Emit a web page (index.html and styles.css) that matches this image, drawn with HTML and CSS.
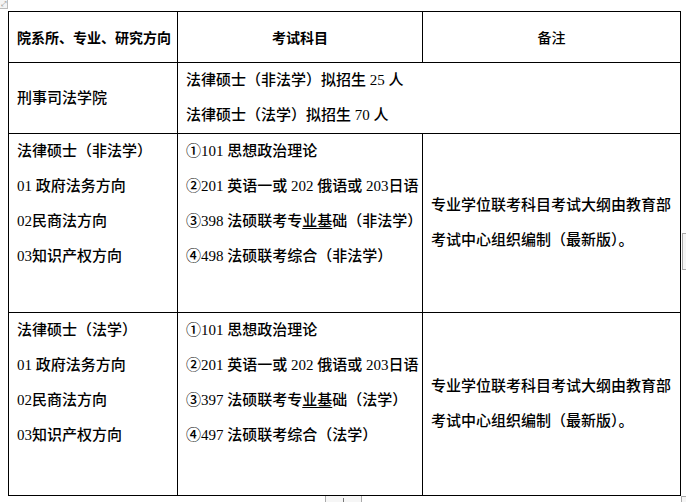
FILE: index.html
```html
<!DOCTYPE html>
<html lang="zh-CN">
<head>
<meta charset="utf-8">
<title>考试科目</title>
<link rel="stylesheet" href="styles.css">
</head>
<body>
<div class="page">
  <span class="handle-move">⤢</span>
  <table class="exam">
    <colgroup>
      <col class="c1">
      <col class="c2">
      <col class="c3">
    </colgroup>
    <tr class="r-head">
      <th class="left">院系所、专业、研究方向</th>
      <th>考试科目</th>
      <th class="light">备注</th>
    </tr>
    <tr class="r-school">
      <td class="mid">刑事司法学院</td>
      <td class="mid" colspan="2">法律硕士（非法学）拟招生 25 人<br>法律硕士（法学）拟招生 70 人</td>
    </tr>
    <tr class="r-a">
      <td class="top">法律硕士（非法学）<br>01 政府法务方向<br>02民商法方向<br>03知识产权方向</td>
      <td class="top">①101 思想政治理论<br>②201 英语一或 202 俄语或 203日语<br>③398 法硕联考专<u>业基</u>础（非法学）<br>④498 法硕联考综合（非法学）</td>
      <td class="mid note">专业学位联考科目考试大纲由教育部<br>考试中心组织编制（最新版）。</td>
    </tr>
    <tr class="r-b">
      <td class="top">法律硕士（法学）<br>01 政府法务方向<br>02民商法方向<br>03知识产权方向</td>
      <td class="top">①101 思想政治理论<br>②201 英语一或 202 俄语或 203日语<br>③397 法硕联考专<u>业基</u>础（法学）<br>④497 法硕联考综合（法学）</td>
      <td class="mid note">专业学位联考科目考试大纲由教育部<br>考试中心组织编制（最新版）。</td>
    </tr>
  </table>
  <span class="handle-right"></span>
  <span class="handle-bottom"></span>
  <span class="handle-corner"></span>
</div>
</body>
</html>
```
FILE: styles.css
```css
html, body {
  margin: 0;
  padding: 0;
  background: #fff;
}
.page {
  position: relative;
  width: 686px;
  height: 502px;
  overflow: hidden;
  padding: 11px 0 0 8px;
  box-sizing: border-box;
  font-family: "Liberation Serif", "Noto Sans CJK SC", serif;
  font-size: 15px;
  font-weight: 500;
  color: #000;
}
.exam {
  border-collapse: collapse;
  table-layout: fixed;
  width: 672px;
}
.c1 { width: 169px; }
.c2 { width: 245px; }
.c3 { width: 258px; }
.exam th, .exam td {
  border: 1px solid #000;
  padding: 0 8px;
  line-height: 35px;
  text-align: left;
  white-space: nowrap;
}
.exam th {
  font-family: "Noto Sans CJK SC", sans-serif;
  font-weight: bold;
  font-size: 14px;
  text-align: center;
  vertical-align: middle;
}
.exam th.left { text-align: left; }
.exam th.light { font-weight: 500; }
.r-head { height: 51px; }
.r-school { height: 71px; }
.r-a { height: 179px; }
.r-b { height: 183px; }
.mid { vertical-align: middle; }
.top { vertical-align: top; }
.note { line-height: 33px; }
u { text-decoration: underline; text-underline-offset: 2px; }
.handle-move {
  position: absolute;
  left: 0;
  top: 0;
  width: 7px;
  height: 8px;
  border-right: 1px solid #bbb;
  border-bottom: 1px solid #bbb;
  font-size: 7px;
  line-height: 8px;
  color: #888;
  text-align: center;
  background: #f4f4f4;
}
.handle-right {
  position: absolute;
  left: 682px;
  top: 233px;
  width: 6px;
  height: 35px;
  border: 1px solid #aaa;
  background: #f6f6f6;
}
.handle-bottom {
  position: absolute;
  left: 325px;
  top: 496px;
  width: 35px;
  height: 8px;
  border-left: 1px solid #aaa;
  border-right: 1px solid #aaa;
  background: #f6f6f6;
}
.handle-bottom::after {
  content: "";
  position: absolute;
  left: 17px;
  top: 2px;
  width: 1px;
  height: 4px;
  background: #777;
}
.handle-corner {
  position: absolute;
  left: 681px;
  top: 496px;
  width: 6px;
  height: 8px;
  border: 1px solid #aaa;
  background: #f6f6f6;
}
```
